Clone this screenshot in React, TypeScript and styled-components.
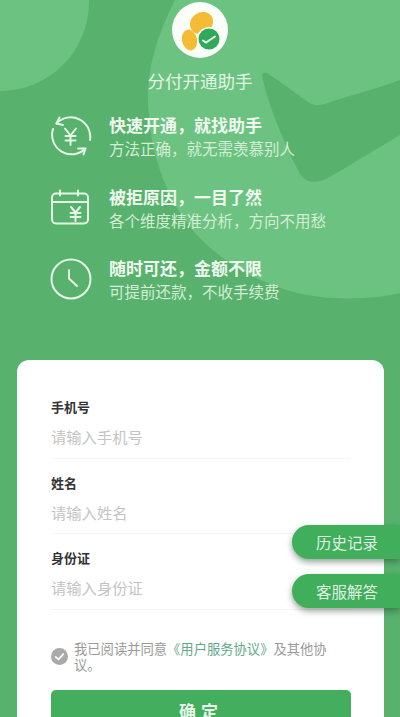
import React from "react";
import styled, { createGlobalStyle } from "styled-components";

const fontStack = `"Noto Sans CJK SC", "Noto Sans", sans-serif`;

const GlobalStyle = createGlobalStyle`
  html, body {
    margin: 0;
    padding: 0;
    height: 717px;
    overflow: hidden;
    background: #58b16d;
    font-family: ${fontStack};
  }
`;

const Page = styled.div`
  position: relative;
  width: 400px;
  height: 717px;
  overflow: hidden;
  background: #58b16d;
`;

const Backdrop = styled.svg`
  position: absolute;
  inset: 0;
`;

const Header = styled.header`
  position: relative;
  display: flex;
  flex-direction: column;
  align-items: center;
  padding-top: 2px;
`;

const LogoCircle = styled.div`
  width: 56px;
  height: 56px;
  border-radius: 50%;
  background: #fbfdf9;
  display: flex;
  align-items: center;
  justify-content: center;
`;

const AppName = styled.h1`
  margin: 10px 0 0;
  font-size: 17.5px;
  line-height: 26px;
  font-weight: 400;
  color: #e3f3e4;
`;

const Features = styled.ul`
  position: relative;
  list-style: none;
  margin: 18px 0 0;
  padding: 0 0 0 50px;
  display: flex;
  flex-direction: column;
  gap: 23.5px;
`;

const Feature = styled.li`
  display: flex;
  align-items: center;
  gap: 17px;
  height: 48px;
`;

const FeatureIcon = styled.svg`
  width: 42px;
  height: 42px;
  flex: none;
  color: #e6f6e6;
`;

const FeatureText = styled.div`
  display: flex;
  flex-direction: column;
`;

const FeatureTitle = styled.div`
  font-size: 17px;
  line-height: 24px;
  font-weight: 700;
  color: #eef8ee;
`;

const FeatureSub = styled.div`
  font-size: 15.5px;
  line-height: 22px;
  white-space: nowrap;
  color: #d4edd6;
`;

const Card = styled.form`
  position: absolute;
  left: 17px;
  top: 360px;
  width: 367px;
  height: 400px;
  box-sizing: border-box;
  padding: 35px 33px 0 34px;
  background: #fff;
  border-radius: 12px;
`;

const Field = styled.div`
  height: 63.5px;
  box-sizing: border-box;
  border-bottom: 1px solid #f5f5f5;
  margin-bottom: 12px;
`;

const FieldLabel = styled.label`
  display: block;
  font-size: 13px;
  line-height: 24px;
  font-weight: 700;
  color: #333;
`;

const FieldInput = styled.input`
  display: block;
  width: 100%;
  margin-top: 5px;
  padding: 0;
  border: 0;
  outline: 0;
  background: transparent;
  font-family: inherit;
  font-size: 15.3px;
  line-height: 24px;
  color: #333;

  &::placeholder {
    color: #c4c4c4;
    opacity: 1;
  }
`;

const Agreement = styled.div`
  display: flex;
  align-items: center;
  gap: 6px;
  margin-top: 31px;
`;

const CheckMark = styled.svg`
  width: 17px;
  height: 17px;
  flex: none;
`;

const AgreementText = styled.p`
  margin: 0;
  font-size: 13.3px;
  line-height: 16px;
  color: #9a9a9a;
`;

const AgreementLink = styled.span`
  color: #5fa98a;
`;

const Submit = styled.button`
  display: block;
  width: 100%;
  height: 42px;
  margin-top: 17px;
  border: 0;
  border-radius: 5px;
  background: #43ae5e;
  color: #e9f6ea;
  font-family: inherit;
  font-size: 17px;
  line-height: 20px;
  font-weight: 700;
  letter-spacing: 5px;
`;

const FloatButton = styled.button<{ $top: number }>`
  position: absolute;
  left: 292px;
  top: ${({ $top }) => $top}px;
  width: 108px;
  height: 34px;
  padding: 0 0 0 24px;
  text-align: left;
  border: 0;
  border-radius: 17px 0 0 17px;
  background: #41ae5c;
  color: #dff2e1;
  font-family: inherit;
  font-size: 15.5px;
  box-shadow: 0 3px 6px rgba(40, 70, 50, 0.5);
`;

const Logo = () => (
  <svg width="56" height="56" viewBox="0 0 56 56">
    <ellipse cx="29.500" cy="21" rx="12" ry="10.500" fill="#f4bb34" transform="rotate(-35 29.500 21)" />
    <ellipse cx="17.500" cy="38" rx="7.500" ry="10.500" fill="#f4bb34" transform="rotate(-12 17.500 38)" />
    <circle cx="37" cy="37" r="12" fill="#fbfdf9" />
    <circle cx="37" cy="37" r="10.500" fill="#2fa95a" />
    <path d="M31 38.500l3 2 9-6" fill="none" stroke="#eaf7ec" strokeWidth="2" strokeLinecap="round" />
  </svg>
);

const ExchangeIcon = () => (
  <FeatureIcon viewBox="0 0 42 42" fill="none" stroke="currentColor" strokeWidth="2" strokeLinecap="round" strokeLinejoin="round">
    <path d="M6.500 8.500A19.500 19.500 0 0 1 40 25" />
    <path d="M9.500 2.500L6.500 8.500L13 10" />
    <path d="M35.500 33.500A19.500 19.500 0 0 1 3 14" />
    <path d="M28 33.500H35.500L33.500 39.500" />
    <path d="M15 13.500L20.500 20.500L26 13.500M15.500 21H25.500M15.500 25.500H25.500M20.500 20.500V30" />
  </FeatureIcon>
);

const CalendarIcon = () => (
  <FeatureIcon viewBox="0 0 42 42" fill="none" stroke="currentColor" strokeWidth="2" strokeLinecap="round" strokeLinejoin="round">
    <rect x="2" y="6.500" width="36" height="30" rx="4" />
    <path d="M2 15H38M10 3.500V8.500M28 3.500V8.500" />
    <path d="M21 20L25.500 25.500L30 20M20.500 26H30.500M20.500 30H30.500M25.500 25.500V34" />
  </FeatureIcon>
);

const ClockIcon = () => (
  <FeatureIcon viewBox="0 0 42 42" fill="none" stroke="currentColor" strokeWidth="2" strokeLinecap="round" strokeLinejoin="round">
    <circle cx="21" cy="21" r="19.500" />
    <path d="M19 12V20.500L27 28" />
  </FeatureIcon>
);

const features = [
  { icon: <ExchangeIcon />, title: "快速开通，就找助手", sub: "方法正确，就无需羡慕别人" },
  { icon: <CalendarIcon />, title: "被拒原因，一目了然", sub: "各个维度精准分析，方向不用愁" },
  { icon: <ClockIcon />, title: "随时可还，金额不限", sub: "可提前还款，不收手续费" },
];

const fields = [
  { label: "手机号", placeholder: "请输入手机号" },
  { label: "姓名", placeholder: "请输入姓名" },
  { label: "身份证", placeholder: "请输入身份证" },
];

export default function App() {
  return (
    <Page>
      <GlobalStyle />
      <Backdrop width="400" height="717" viewBox="0 0 400 717">
        <circle cx="0" cy="2" r="89" fill="#6cc381" />
        <path d="M175 0C157 35 147 70 148 100C149 150 165 195 190 227C215 258 262 290 320 297C350 300 380 298 400 293V0Z" fill="#6cc381" />
        <path d="M262 76C262 72 266 72 270 75C285 85 298 95 308 102C314 106 320 106 328 103C350 95 380 88 400 80V135C375 150 350 165 328 178C318 183 306 184 300 174C285 145 268 105 262 76Z" fill="#58b16d" />
      </Backdrop>
      <Header>
        <LogoCircle>
          <Logo />
        </LogoCircle>
        <AppName>分付开通助手</AppName>
      </Header>
      <Features>
        {features.map((f) => (
          <Feature key={f.title}>
            {f.icon}
            <FeatureText>
              <FeatureTitle>{f.title}</FeatureTitle>
              <FeatureSub>{f.sub}</FeatureSub>
            </FeatureText>
          </Feature>
        ))}
      </Features>
      <Card>
        {fields.map((f) => (
          <Field key={f.label}>
            <FieldLabel>{f.label}</FieldLabel>
            <FieldInput placeholder={f.placeholder} />
          </Field>
        ))}
        <Agreement>
          <CheckMark viewBox="0 0 18 18">
            <circle cx="9" cy="9" r="9" fill="#aaa" />
            <path d="M5 9.500L8 12L13 6.500" fill="none" stroke="#fff" strokeWidth="1.800" strokeLinecap="round" strokeLinejoin="round" />
          </CheckMark>
          <AgreementText>
            我已阅读并同意<AgreementLink>《用户服务协议》</AgreementLink>及其他协议。
          </AgreementText>
        </Agreement>
        <Submit type="button">确定</Submit>
      </Card>
      <FloatButton type="button" $top={525}>历史记录</FloatButton>
      <FloatButton type="button" $top={574}>客服解答</FloatButton>
    </Page>
  );
}
